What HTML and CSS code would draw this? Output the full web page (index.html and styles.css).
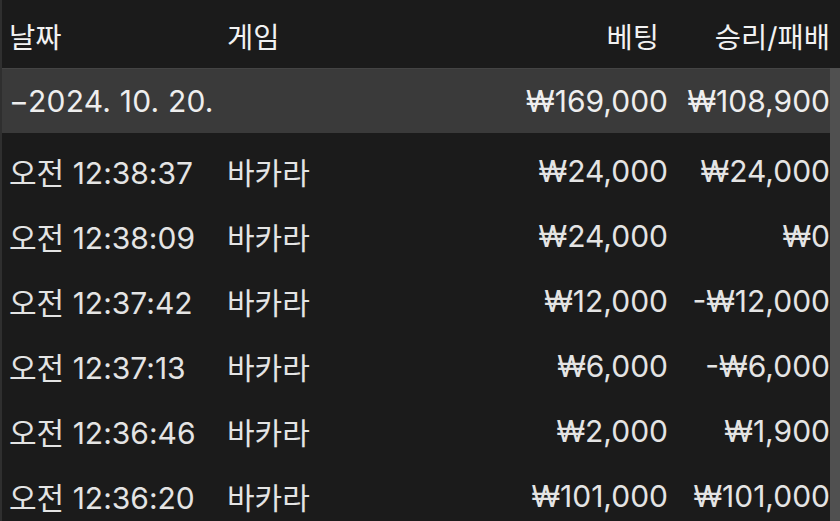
FILE: index.html
```html
<!DOCTYPE html>
<html lang="ko">
<head>
<meta charset="utf-8">
<link rel="stylesheet" href="styles.css">
</head>
<body>
<div class="screen">
  <div class="row head">
    <div class="c-date">날짜</div>
    <div class="c-game">게임</div>
    <div class="c-bet">베팅</div>
    <div class="c-win">승리/패배</div>
  </div>
  <div class="row summary">
    <div class="c-date">−2024. 10. 20.</div>
    <div class="c-game"></div>
    <div class="c-bet">₩169,000</div>
    <div class="c-win">₩108,900</div>
  </div>
  <div class="list">
    <div class="row item">
      <div class="c-date">오전 12:38:37</div>
      <div class="c-game">바카라</div>
      <div class="c-bet">₩24,000</div>
      <div class="c-win">₩24,000</div>
    </div>
    <div class="row item">
      <div class="c-date">오전 12:38:09</div>
      <div class="c-game">바카라</div>
      <div class="c-bet">₩24,000</div>
      <div class="c-win">₩0</div>
    </div>
    <div class="row item">
      <div class="c-date">오전 12:37:42</div>
      <div class="c-game">바카라</div>
      <div class="c-bet">₩12,000</div>
      <div class="c-win">-₩12,000</div>
    </div>
    <div class="row item">
      <div class="c-date">오전 12:37:13</div>
      <div class="c-game">바카라</div>
      <div class="c-bet">₩6,000</div>
      <div class="c-win">-₩6,000</div>
    </div>
    <div class="row item">
      <div class="c-date">오전 12:36:46</div>
      <div class="c-game">바카라</div>
      <div class="c-bet">₩2,000</div>
      <div class="c-win">₩1,900</div>
    </div>
    <div class="row item">
      <div class="c-date">오전 12:36:20</div>
      <div class="c-game">바카라</div>
      <div class="c-bet">₩101,000</div>
      <div class="c-win">₩101,000</div>
    </div>
  </div>
  <div class="scrollbar"></div>
</div>
</body>
</html>
```

FILE: styles.css
```css
html, body {
  margin: 0;
  padding: 0;
  background: #1c1c1c;
}
.screen {
  position: relative;
  width: 840px;
  height: 521px;
  overflow: hidden;
  box-sizing: border-box;
  border-left: 2px solid #2f2f2f;
  background: #1b1b1b;
  font-family: Inter, "Noto Sans CJK KR", sans-serif;
  font-size: 30px;
  color: #e4e4e4;
}
.row {
  display: grid;
  grid-template-columns: 218px 1fr 160px 162px;
  align-items: center;
  padding-left: 7px;
  padding-right: 10px;
}
.c-bet, .c-win {
  text-align: right;
  white-space: nowrap;
}
.c-date, .c-game {
  white-space: nowrap;
}
.summary .c-date {
  letter-spacing: 0.2px;
}
.head {
  height: 68px;
  padding-top: 3px;
  box-sizing: border-box;
  color: #f2f2f2;
  font-size: 28.5px;
}
.head .c-bet {
  padding-right: 9px;
}
.summary {
  height: 65px;
  background: #3a3a3a;
  border-top: 1px solid #444;
  box-sizing: border-box;
  color: #eeeeee;
}
.list {
  display: flex;
  flex-direction: column;
  padding-top: 5px;
}
.item {
  height: 65px;
}
.scrollbar {
  position: absolute;
  right: 0;
  top: 68px;
  bottom: 0;
  width: 10px;
  background: #505050;
}
```
